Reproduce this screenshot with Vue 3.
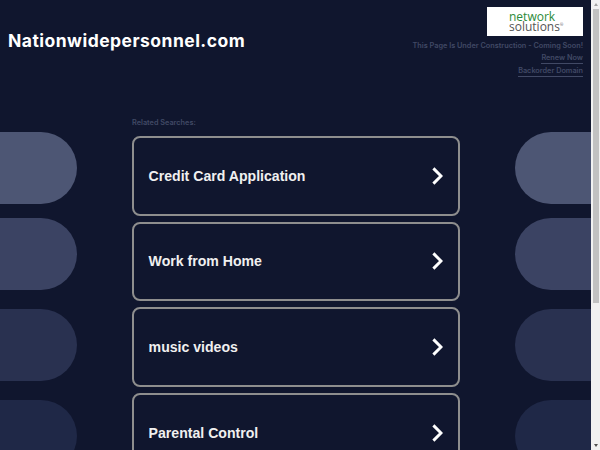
<script setup>
const links = ['Credit Card Application', 'Work from Home', 'music videos', 'Parental Control']
const pills = ['p1', 'p2', 'p3', 'p4']
</script>

<template>
  <div class="window">
    <main class="page">
      <header class="top">
        <h1 class="domain">Nationwidepersonnel.com</h1>
        <div class="notice">
          <div class="logo">
            <span class="net">network</span>
            <span class="sol">solutions<sup>®</sup></span>
          </div>
          <p class="line">This Page Is Under Construction - Coming Soon!</p>
          <a class="line link">Renew Now</a>
          <a class="line link">Backorder Domain</a>
        </div>
      </header>
      <div class="body">
        <div class="side left">
          <div v-for="p in pills" :key="p" class="pill" :class="p"></div>
        </div>
        <section class="center">
          <p class="label">Related Searches:</p>
          <div class="cards">
            <a v-for="t in links" :key="t" class="card">
              <span>{{ t }}</span>
              <svg class="chev" viewBox="0 0 12 18" width="12" height="18">
                <path d="M3.4 2.4 L10 9 L3.4 15.6" fill="none" stroke="#fff" stroke-width="2.9" stroke-linecap="square" />
              </svg>
            </a>
          </div>
        </section>
        <div class="side right">
          <div v-for="p in pills" :key="p" class="pill" :class="p"></div>
        </div>
      </div>
    </main>
    <aside class="scrollbar">
      <span class="arrow up"></span>
      <div class="track"><div class="thumb"></div></div>
      <span class="arrow down"></span>
    </aside>
  </div>
</template>

<style scoped>
.window {
  display: flex;
  width: 600px;
  height: 450px;
  overflow: hidden;
  background: #10162e;
}
.page {
  width: 591px;
  height: 450px;
  overflow: hidden;
  flex: none;
}
.top {
  display: flex;
  justify-content: space-between;
  align-items: flex-start;
  height: 132px;
  padding: 7px 8px 0;
  box-sizing: border-box;
}
.domain {
  margin: 24px 0 0;
  font: 700 17.5px/20px Inter, sans-serif;
  letter-spacing: 0.47px;
  color: #fff;
}
.notice {
  display: flex;
  flex-direction: column;
  align-items: flex-end;
}
.logo {
  width: 96px;
  height: 29px;
  box-sizing: border-box;
  padding: 4.5px 0 0 22px;
  background: #fff;
  display: flex;
  flex-direction: column;
  font-family: "Open Sans", sans-serif;
  font-size: 12px;
  line-height: 10.5px;
}
.net { color: #2a8a38; font-weight: 500; }
.sol { color: #555; }
.sol sup { font-size: 4px; line-height: 0; }
.line {
  margin: 0;
  font: 600 7.3px/10px Inter, sans-serif;
  color: #414965;
}
.notice > p.line { margin-top: 5px; }
.link {
  margin-top: 2px;
  border-bottom: 1px solid #414965;
}
.body {
  display: grid;
  grid-template-columns: 77px 328px 76px;
  column-gap: 55px;
}
.side {
  display: flex;
  flex-direction: column;
  gap: 19px;
}
.pill { height: 72px; }
.side .p2 { margin-top: -5px; }
.left .pill { border-radius: 0 36px 36px 0; }
.right .pill { border-radius: 36px 0 0 36px; }
.p1 { background: #4d5674; }
.p2 { background: #3b4363; }
.p3 { background: #293150; }
.p4 { background: #1f2847; }
.center { margin-top: -14px; }
.label {
  margin: 0;
  font: 600 7.3px/10px Inter, sans-serif;
  color: #414965;
  height: 18px;
}
.cards {
  display: flex;
  flex-direction: column;
  gap: 6px;
}
.card {
  height: 79.6px;
  box-sizing: border-box;
  border: 2.4px solid #8e8e8e;
  border-radius: 8px;
  padding: 0 14.6px;
  display: flex;
  align-items: center;
  justify-content: space-between;
  font: 700 14.1px/18px "Liberation Sans", sans-serif;
  color: #f0f0f0;
  flex: none;
}
.chev { display: block; }
.scrollbar {
  width: 9px;
  height: 450px;
  flex: none;
  background: #f1f1f1;
  display: flex;
  flex-direction: column;
  align-items: center;
}
.arrow {
  flex: none;
  width: 0;
  height: 0;
  border-left: 2.5px solid transparent;
  border-right: 2.5px solid transparent;
  margin: 3px 0;
}
.arrow.up { border-bottom: 3px solid #a3a3a3; }
.arrow.down { border-top: 3px solid #505050; }
.track { flex: 1; width: 100%; display: flex; justify-content: center; }
.thumb {
  width: 6px;
  height: 294px;
  background: #c1c1c1;
}
</style>

<style>
html, body { margin: 0; background: #10162e; }
</style>
